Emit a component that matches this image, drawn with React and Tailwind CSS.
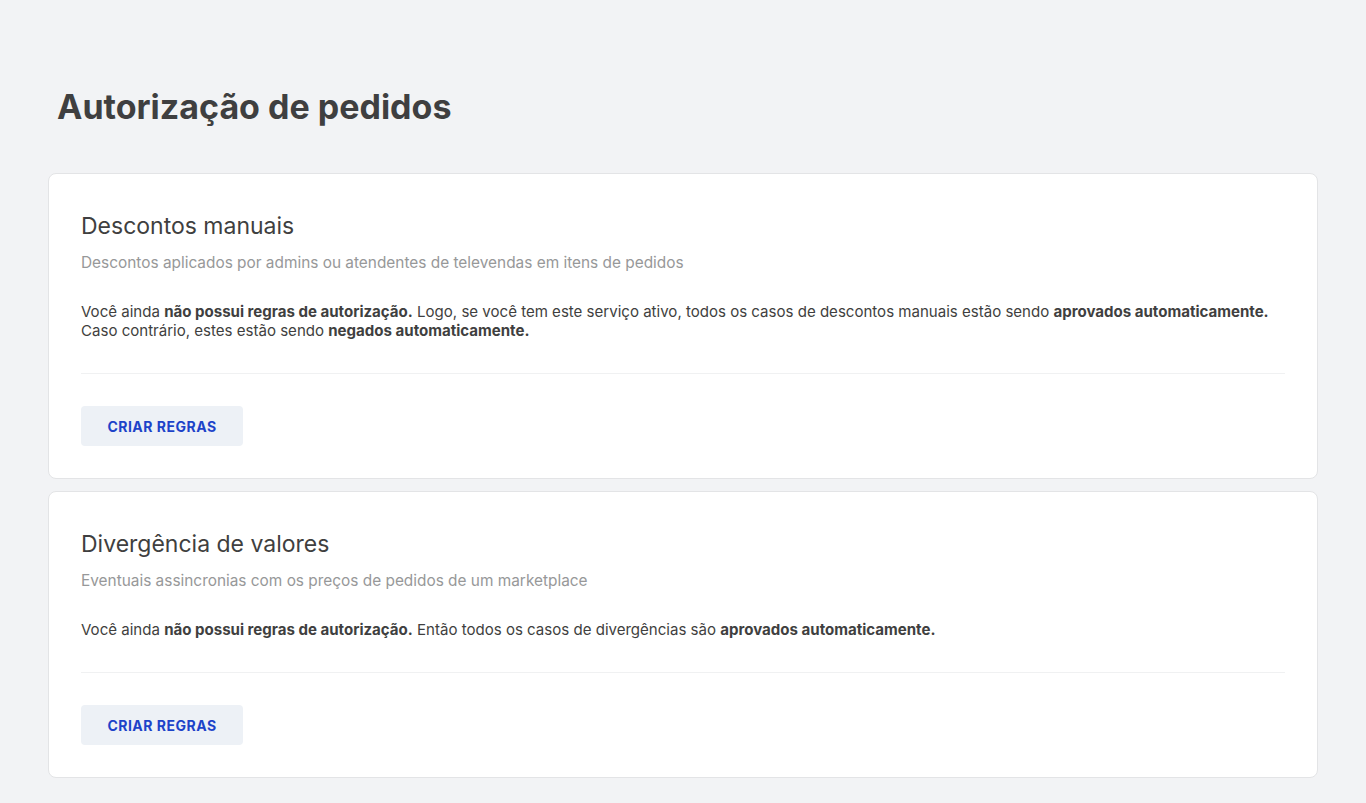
const cards = [
  {
    title: 'Descontos manuais',
    subtitle: 'Descontos aplicados por admins ou atendentes de televendas em itens de pedidos',
    body: (
      <>
        Você ainda <b className="font-bold">não possui regras de autorização.</b> Logo, se você tem este serviço
        ativo, todos os casos de descontos manuais estão sendo{' '}
        <b className="font-bold">aprovados automaticamente.</b>
        <br />
        Caso contrário, estes estão sendo <b className="font-bold">negados automaticamente.</b>
      </>
    ),
  },
  {
    title: 'Divergência de valores',
    subtitle: 'Eventuais assincronias com os preços de pedidos de um marketplace',
    body: (
      <>
        Você ainda <b className="font-bold">não possui regras de autorização.</b> Então todos os casos de
        divergências são <b className="font-bold">aprovados automaticamente.</b>
      </>
    ),
  },
];

function RuleCard({ title, subtitle, body }) {
  return (
    <section className="bg-white border border-[#e3e4e6] rounded-[8px] px-[32px] pt-[38px] pb-[32px]">
      <h2 className="text-[23px] leading-[28px] text-[#3f3f40] font-normal">{title}</h2>
      <p className="mt-[13px] text-[15.4px] leading-[20px] text-[#979899]">{subtitle}</p>
      <p className="mt-[29px] text-[15.05px] leading-[19px] text-[#3f3f40]">{body}</p>
      <hr className="mt-[33px] border-0 border-t border-[#f0f1f2]" />
      <button
        type="button"
        className="mt-[32px] h-[40px] w-[162px] rounded-[4px] bg-[#edf1f6] text-[14px] font-bold text-[#1d43c9] tracking-[0.5px]"
      >
        CRIAR REGRAS
      </button>
    </section>
  );
}

export default function App() {
  return (
    <div className="min-h-[803px] bg-[#f2f3f5] px-[48px] pt-[86px] pb-[24px] font-['Inter',sans-serif]">
      <h1 className="ml-[9px] text-[34px] leading-[42px] font-bold text-[#3f3f40]">
        Autorização de pedidos
      </h1>
      <div className="mt-[45px] flex flex-col gap-[12px]">
        {cards.map((c) => (
          <RuleCard key={c.title} {...c} />
        ))}
      </div>
    </div>
  );
}
